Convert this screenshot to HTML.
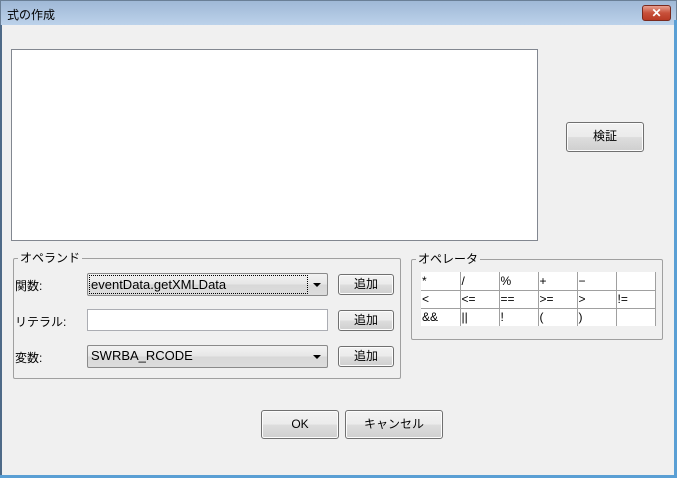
<!DOCTYPE html>
<html><head><meta charset="utf-8"><style>
*{margin:0;padding:0;box-sizing:border-box}
body{width:677px;height:478px;background:#f0f0f0;position:relative;overflow:hidden;font-family:"Liberation Sans","Noto Sans CJK JP",sans-serif;font-size:12px;color:#000}
.a{position:absolute}
.title{left:0;top:0;width:677px;height:25px;background:linear-gradient(#9fb8d6,#bcd2ea);border:1px solid #6a7f96;border-bottom:none}
.btn{position:absolute;border:1px solid #707070;border-radius:3px;background:linear-gradient(#f2f2f2 0%,#ebebeb 50%,#dddddd 51%,#cfcfcf 100%);text-align:center;font-size:12px;box-shadow:inset 0 0 0 1px #fcfcfc}
.grp{position:absolute;border:1px solid #a0a0a0;border-radius:2px}
.lgd{position:absolute;background:#f0f0f0;padding:0 2px;top:-8px;left:4px;line-height:14px}
.combo{position:absolute;border:1px solid #8a8a8a;border-radius:2px;background:linear-gradient(#f2f2f2,#e6e6e6 50%,#d8d8d8 51%,#dcdcdc);font-size:13px;line-height:20px;padding-left:3px;overflow:hidden}
.arr{position:absolute;right:6px;top:9px;width:0;height:0;border-left:4px solid transparent;border-right:4px solid transparent;border-top:4px solid #000}
table{border-collapse:collapse;position:absolute;left:421px;top:272px;background:#fff}
td{width:39px;height:18px;border:1px solid #a0a0a0;border-top:none;border-left:none;font-size:12px;padding-left:1px;vertical-align:middle}
tr:last-child td{border-bottom:none}
</style></head><body>
<div class="a title"></div>
<div class="a" style="left:7px;top:6px;font-size:12px">式の作成</div>
<div class="a" style="left:642px;top:5px;width:29px;height:16px;border:1px solid #7a2a1e;border-radius:3px;background:linear-gradient(#e8a090,#c8503a 50%,#b83a24);color:#fff;font-weight:bold;text-align:center;line-height:14px;font-size:12px">✕</div>
<div class="a" style="left:0;top:25px;width:2px;height:453px;background:#4e6a88"></div>
<div class="a" style="left:674px;top:20px;width:3px;height:458px;background:#5a9fd4"></div>
<div class="a" style="left:0;top:475px;width:677px;height:3px;background:#5a9fd4"></div>

<div class="a" style="left:11px;top:49px;width:527px;height:192px;background:#fff;border:1px solid #828790"></div>
<div class="btn" style="left:566px;top:122px;width:78px;height:30px;line-height:27px">検証</div>

<div class="grp" style="left:13px;top:258px;width:388px;height:121px"><div class="lgd">オペランド</div></div>
<div class="a" style="left:15px;top:277px">関数:</div>
<div class="combo" style="left:87px;top:273px;width:241px;height:23px"><div style="position:absolute;left:2px;top:2px;width:217px;height:17px;outline:1px dotted #000;line-height:17px;padding-left:1px">eventData.getXMLData</div><div class="arr"></div></div>
<div class="btn" style="left:338px;top:274px;width:56px;height:21px;line-height:19px">追加</div>
<div class="a" style="left:15px;top:313px">リテラル:</div>
<div class="a" style="left:87px;top:309px;width:241px;height:22px;background:#fff;border:1px solid #abadb3"></div>
<div class="btn" style="left:338px;top:310px;width:56px;height:21px;line-height:19px">追加</div>
<div class="a" style="left:15px;top:349px">変数:</div>
<div class="combo" style="left:87px;top:345px;width:241px;height:23px">SWRBA_RCODE<div class="arr"></div></div>
<div class="btn" style="left:338px;top:346px;width:56px;height:21px;line-height:19px">追加</div>

<div class="grp" style="left:411px;top:259px;width:252px;height:81px"><div class="lgd">オペレータ</div></div>
<table>
<tr><td>*</td><td>/</td><td>%</td><td>+</td><td>−</td><td></td></tr>
<tr><td>&lt;</td><td>&lt;=</td><td>==</td><td>&gt;=</td><td>&gt;</td><td>!=</td></tr>
<tr><td>&amp;&amp;</td><td>||</td><td>!</td><td>(</td><td>)</td><td></td></tr>
</table>

<div class="btn" style="left:261px;top:410px;width:78px;height:29px;line-height:27px">OK</div>
<div class="btn" style="left:345px;top:410px;width:98px;height:29px;line-height:27px">キャンセル</div>
</body></html>
